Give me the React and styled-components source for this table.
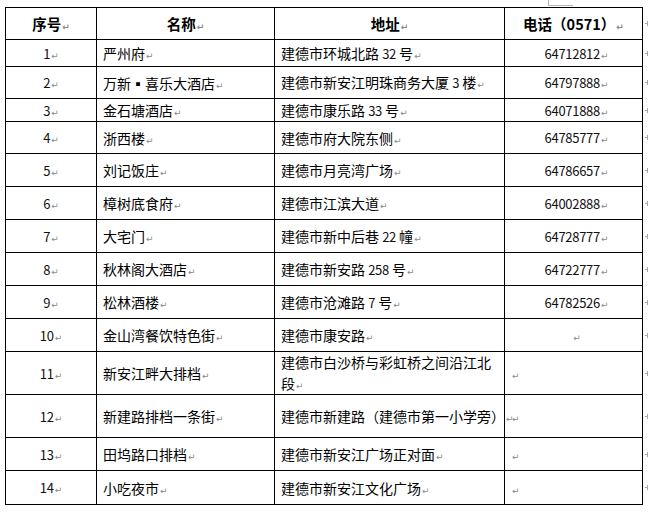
import React from 'react';
import styled, { createGlobalStyle } from 'styled-components';

const GlobalStyle = createGlobalStyle`
  html, body {
    margin: 0;
    padding: 0;
    background: #ffffff;
  }
  body {
    font-family: "Noto Sans CJK SC", "Noto Sans", sans-serif;
    color: #000;
  }
`;

const Page = styled.div`
  width: 648px;
  height: 512px;
  overflow: hidden;
  background: #fff;
`;

// little move-handle mark Word draws above the table
const TopStrip = styled.div`
  height: 7px;
  display: flex;
`;

const Handle = styled.div`
  margin-left: 548px;
  width: 24px;
  height: 5px;
  border-left: 1px solid #b5b5b5;
  border-bottom: 1px solid #b5b5b5;
`;

const Table = styled.table`
  margin-left: 5px;
  width: 648px;
  border-collapse: collapse;
  table-layout: fixed;
`;

const Row = styled.tr`
  height: ${(p) => p.$h}px;
`;

const Cell = styled.td`
  border: 1px solid #000;
  padding: 0 ${(p) => (p.$align === 'left' ? '6px' : '2px')};
  text-align: ${(p) => p.$align || 'center'};
  vertical-align: middle;
  font-size: 14px;
  line-height: ${(p) => (p.$wrap ? '21px' : '20px')};
  white-space: ${(p) => (p.$nowrap ? 'nowrap' : 'normal')};
  overflow: visible;
`;

const HeadCell = styled(Cell)`
  font-weight: bold;
  font-size: 14.5px;
`;

const TelCell = styled(Cell)`
  padding-left: 8px;
`;

const Num = styled.span`
  font-size: 13px;
  letter-spacing: -0.3px;
  color: #111;
`;

const Mark = styled.span`
  font-family: "DejaVu Sans", sans-serif;
  font-size: 9px;
  line-height: 1;
  color: #8a8a8a;
  margin-left: 1px;
`;

const EndCell = styled.td`
  padding: 0 0 0 2px;
  vertical-align: middle;
  border: none;
`;

const EndMark = styled.span`
  display: block;
  width: 5px;
  height: 5px;
  position: relative;
  &::before,
  &::after {
    content: '';
    position: absolute;
    background: #a8a8a8;
  }
  &::before {
    left: 2px;
    top: 0;
    width: 1px;
    height: 5px;
  }
  &::after {
    left: 0;
    top: 2px;
    width: 5px;
    height: 1px;
  }
`;

const Text = ({ children }) => {
  // numbers inside addresses use the narrower number style
  const parts = String(children).split(/(\d+)/);
  return parts.map((s, i) => (/^\d+$/.test(s) ? <Num key={i}>{s}</Num> : s));
};

const rows = [
  { n: 1, name: '严州府', addr: '建德市环城北路 32 号', tel: '64712812', h: 27 },
  { n: 2, name: '万新▪喜乐大酒店', addr: '建德市新安江明珠商务大厦 3 楼', tel: '64797888', h: 32 },
  { n: 3, name: '金石塘酒店', addr: '建德市康乐路 33 号', tel: '64071888', h: 23 },
  { n: 4, name: '浙西楼', addr: '建德市府大院东侧', tel: '64785777', h: 32 },
  { n: 5, name: '刘记饭庄', addr: '建德市月亮湾广场', tel: '64786657', h: 33 },
  { n: 6, name: '樟树底食府', addr: '建德市江滨大道', tel: '64002888', h: 33 },
  { n: 7, name: '大宅门', addr: '建德市新中后巷 22 幢', tel: '64728777', h: 33 },
  { n: 8, name: '秋林阁大酒店', addr: '建德市新安路 258 号', tel: '64722777', h: 33 },
  { n: 9, name: '松林酒楼', addr: '建德市沧滩路 7 号', tel: '64782526', h: 33 },
  { n: 10, name: '金山湾餐饮特色街', addr: '建德市康安路', tel: '', h: 33 },
  { n: 11, name: '新安江畔大排档', addr: '建德市白沙桥与彩虹桥之间沿江北', addr2: '段', tel: null, h: 43 },
  { n: 12, name: '新建路排档一条街', addr: '建德市新建路（建德市第一小学旁）', tel: null, h: 43, nowrap: true },
  { n: 13, name: '田坞路口排档', addr: '建德市新安江广场正对面', tel: null, h: 33 },
  { n: 14, name: '小吃夜市', addr: '建德市新安江文化广场', tel: null, h: 34 },
];

const App = () => (
  <Page>
    <GlobalStyle />
    <TopStrip>
      <Handle />
    </TopStrip>
    <Table>
      <colgroup>
        <col style={{ width: 91 }} />
        <col style={{ width: 178 }} />
        <col style={{ width: 230 }} />
        <col style={{ width: 138 }} />
        <col style={{ width: 11 }} />
      </colgroup>
      <tbody>
        <Row $h={32}>
          <HeadCell>序号<Mark>↵</Mark></HeadCell>
          <HeadCell>名称<Mark>↵</Mark></HeadCell>
          <HeadCell>地址<Mark>↵</Mark></HeadCell>
          <HeadCell>电话（0571）<Mark>↵</Mark></HeadCell>
          <EndCell><EndMark /></EndCell>
        </Row>
        {rows.map((r) => (
          <Row key={r.n} $h={r.h}>
            <Cell><Num>{r.n}</Num><Mark>↵</Mark></Cell>
            <Cell $align="left">{r.name}<Mark>↵</Mark></Cell>
            <Cell $align="left" $nowrap={r.nowrap} $wrap={!!r.addr2}>
              <Text>{r.addr}</Text>
              {r.addr2 && (
                <>
                  <br />
                  {r.addr2}
                </>
              )}
              <Mark>↵</Mark>
            </Cell>
            {r.tel === null ? (
              <Cell $align="left"><Mark>↵</Mark></Cell>
            ) : (
              <TelCell><Num>{r.tel}</Num><Mark>↵</Mark></TelCell>
            )}
            <EndCell><EndMark /></EndCell>
          </Row>
        ))}
      </tbody>
    </Table>
  </Page>
);

export default App;
